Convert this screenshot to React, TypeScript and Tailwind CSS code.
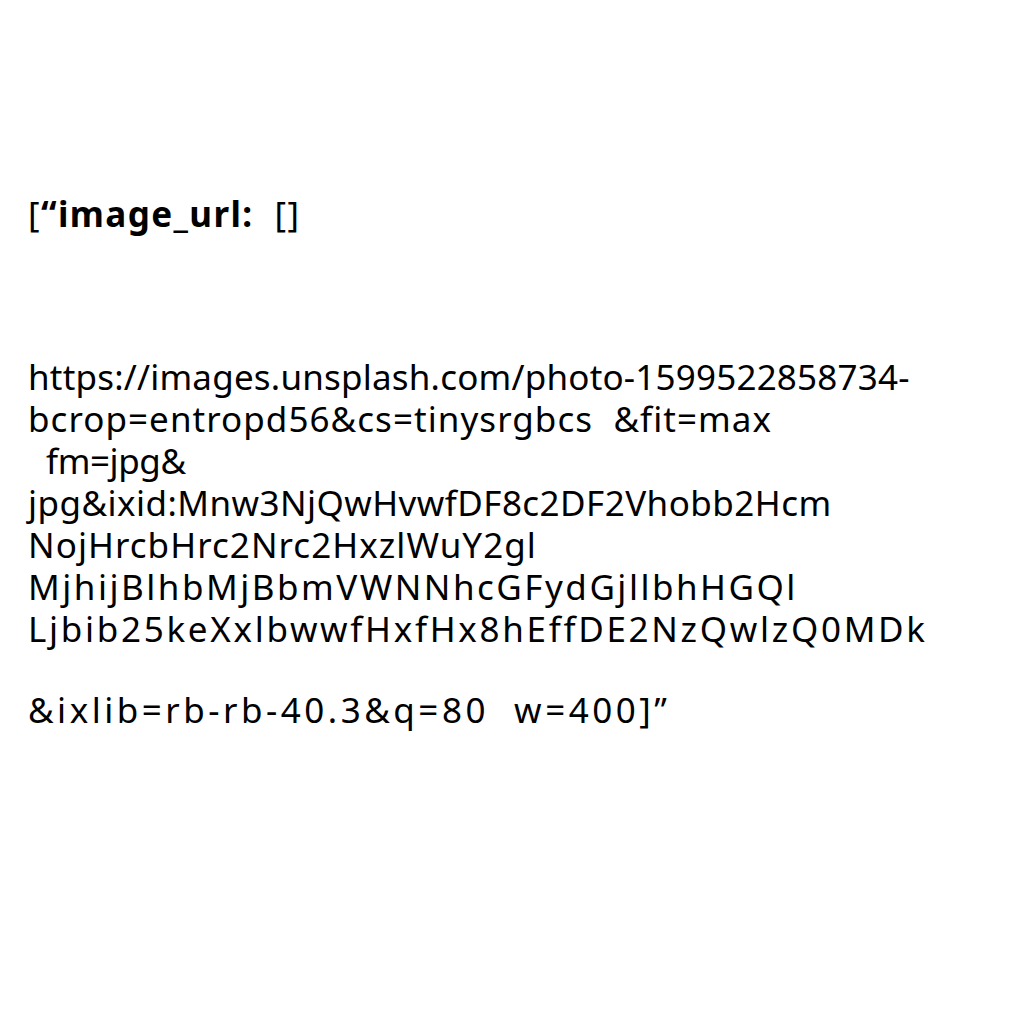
const lines = [
  { text: "https://images.unsplash.com/photo-1599522858734-", cls: "tracking-[0.2px]" },
  { text: "bcrop=entropd56&cs=tinysrgbcs\u00a0 &fit=max", cls: "tracking-[1.05px]" },
  { text: "fm=jpg&", cls: "pl-[18px] tracking-[-0.4px]" },
  { text: "jpg&ixid:Mnw3NjQwHvwfDF8c2DF2Vhobb2Hcm", cls: "tracking-[0.45px]" },
  { text: "NojHrcbHrc2Nrc2HxzlWuY2gl", cls: "tracking-[1.05px]" },
  { text: "MjhijBlhbMjBbmVWNNhcGFydGjllbhHGQl", cls: "tracking-[2.5px]" },
  { text: "Ljbib25keXxlbwwfHxfHx8hEffDE2NzQwlzQ0MDk", cls: "tracking-[2.7px]" },
];

export default function App() {
  return (
    <div className="min-h-[1024px] w-[1024px] bg-white text-black font-['Noto_Sans',sans-serif]">
      <div className="pl-[28px] pt-[190px]">
        <div className="text-[35px] leading-[48px] tracking-[1.4px]">
          <span className="font-normal">[</span>
          <span className="font-bold">“image_url:</span>
          <span className="font-normal">&nbsp; []</span>
        </div>

        <div className="mt-[118px] text-[35px] leading-[42px]">
          {lines.map((line, i) => (
            <div key={i} className={line.cls}>
              {line.text}
            </div>
          ))}
          <div className="mt-[39px] tracking-[3.5px]">&amp;ixlib=rb-rb-40.3&amp;q=80&nbsp; w=400]”</div>
        </div>
      </div>
    </div>
  );
}
